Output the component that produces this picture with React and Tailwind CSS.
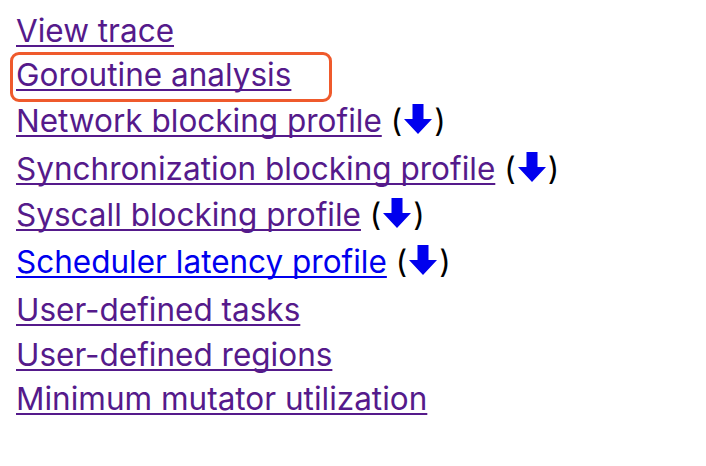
import React from 'react';

const visited = 'text-[#551a8b]';
const fresh = 'text-[#0000ee]';

const rows = [
  { label: 'View trace', color: visited, pad: '' },
  { label: 'Goroutine analysis', color: visited, pad: '', boxed: true },
  { label: 'Network blocking profile', color: visited, pad: 'pt-[2px]', download: true },
  { label: 'Synchronization blocking profile', color: visited, pad: 'pt-[4px]', download: true },
  { label: 'Syscall blocking profile', color: visited, pad: 'pt-[2px]', download: true },
  { label: 'Scheduler latency profile', color: fresh, pad: 'pt-[3px]', download: true },
  { label: 'User-defined tasks', color: visited, pad: 'pt-[4px]' },
  { label: 'User-defined regions', color: visited, pad: 'pt-[1px]' },
  { label: 'Minimum mutator utilization', color: visited, pad: '' },
];

const DownArrow = () => (
  <svg width="28" height="30" viewBox="0 0 28 30" className="mx-[2px] inline-block align-[-2px]">
    <path d="M8.5 0h11v15H28L14 30 0 15h8.5z" fill="#0000ee" />
  </svg>
);

const linkCls =
  'underline decoration-2 underline-offset-[3px] [text-decoration-skip-ink:none]';

export default function App() {
  return (
    <div className="min-h-[466px] bg-white pl-4 pt-[9px] font-['Inter',sans-serif] text-[31.5px] leading-[44px]">
      {rows.map((row) => (
        <div key={row.label} className={`relative ${row.pad}`}>
          <a href="#" className={`${linkCls} ${row.color}`}>
            {row.label}
          </a>
          {row.download && (
            <span className="text-black">
              {' ('}
              <a href="#" className={`${linkCls} decoration-[#0000ee]`}>
                <DownArrow />
              </a>
              {')'}
            </span>
          )}
          {row.boxed && (
            <div className="absolute left-[-6px] top-[-1px] h-[50px] w-[322px] rounded-[9px] border-[3.5px] border-[#ef5a2c]" />
          )}
        </div>
      ))}
    </div>
  );
}
